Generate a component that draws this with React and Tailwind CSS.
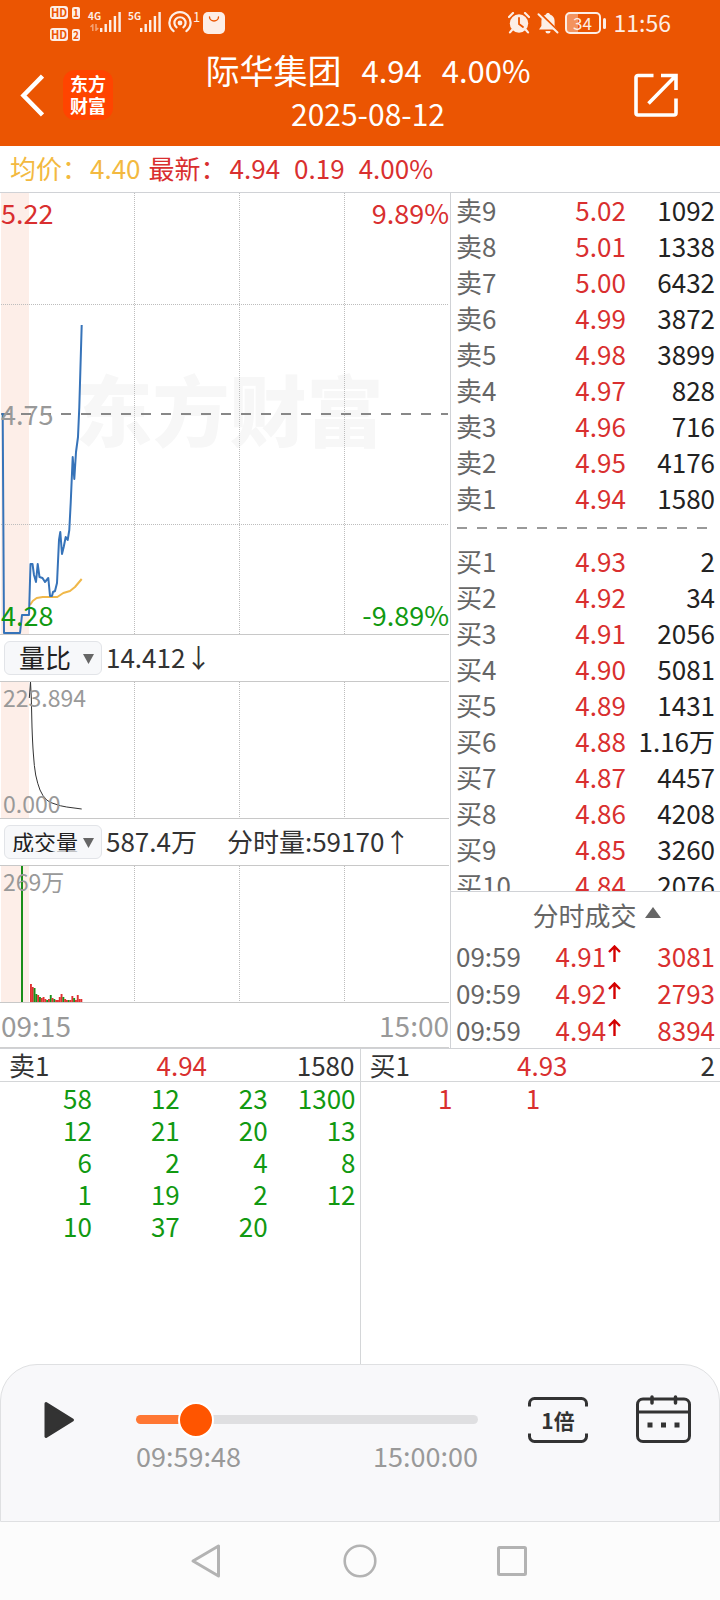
import { useState } from "react";

const asks = [
  ["卖9", "5.02", "1092"],
  ["卖8", "5.01", "1338"],
  ["卖7", "5.00", "6432"],
  ["卖6", "4.99", "3872"],
  ["卖5", "4.98", "3899"],
  ["卖4", "4.97", "828"],
  ["卖3", "4.96", "716"],
  ["卖2", "4.95", "4176"],
  ["卖1", "4.94", "1580"],
];

const bids = [
  ["买1", "4.93", "2"],
  ["买2", "4.92", "34"],
  ["买3", "4.91", "2056"],
  ["买4", "4.90", "5081"],
  ["买5", "4.89", "1431"],
  ["买6", "4.88", "1.16万"],
  ["买7", "4.87", "4457"],
  ["买8", "4.86", "4208"],
  ["买9", "4.85", "3260"],
  ["买10", "4.84", "2076"],
];

const ticks = [
  ["09:59", "4.91", "3081"],
  ["09:59", "4.92", "2793"],
  ["09:59", "4.94", "8394"],
];

const sellQueue = [
  ["58", "12", "23", "1300"],
  ["12", "21", "20", "13"],
  ["6", "2", "4", "8"],
  ["1", "19", "2", "12"],
  ["10", "37", "20", ""],
];

const buyQueue = [["1", "1", "", ""]];

const R = "#e03131";
const G = "#1a8f1a";
const volumeBars = [
  [18, R], [15, R], [14, G], [8, G], [7, R], [5, G], [4, R], [5, R], [3, R], [2, G],
  [3, R], [7, G], [4, R], [3, G], [2, R], [2, R], [5, R], [8, R], [5, G], [3, R],
  [2, R], [2, G], [2, R], [6, R], [4, G], [2, R], [7, R], [3, R], [3, R],
];

const pricePoints =
  "2.7,220 4,440 20,440 22,422 29,422 30.5,371 32.5,371 34,382 36,389 37.7,371 39.5,384 42.5,385 45,389 48.3,385 50,403 52,403 53,399 55,398 57,390 59,347 60.3,339 62,361 63.7,354 65.7,344 67.7,347 69.3,337 70.7,310 72.7,264 74.3,286 76,259 78,244 79.3,214 81.7,132";
const averagePoints =
  "30,412 32.7,408 36.7,405 42.7,404 57.3,404 63.3,400 70,398 75,394 81.7,386";

function Plot({ height, children }) {
  return (
    <svg
      className="absolute inset-0 h-full w-full"
      viewBox={`0 0 449 ${height}`}
      preserveAspectRatio="none"
      aria-hidden="true"
    >
      <rect x="1" y="0" width="28" height={height} fill="#fdeee8" />
      {[134.5, 239.5, 344.5].map((x) => (
        <line key={x} x1={x} x2={x} y1="0" y2={height} stroke="#bdbdbd" strokeDasharray="1 1" />
      ))}
      {children}
    </svg>
  );
}

function Signal({ label, data }) {
  return (
    <div className="relative flex items-start">
      <div className="w-3 text-[10px] leading-[10px] font-bold">{label}</div>
      <svg className="h-[22px] w-[22px]" viewBox="0 0 22 22" fill="currentColor" aria-hidden="true">
        <rect x="0" y="17" width="2.4" height="4" />
        <rect x="4.5" y="13" width="2.4" height="8" />
        <rect x="9" y="9" width="2.4" height="12" />
        <rect x="13.7" y="5" width="2.4" height="16" />
        <rect x="18.4" y="1" width="2.4" height="20" />
      </svg>
      {data && (
        <svg className="absolute bottom-0.5 left-0.5 h-[7px] w-[9px] opacity-50" viewBox="0 0 9 7" fill="none" stroke="currentColor" strokeWidth="1.5" aria-hidden="true">
          <path d="M2.800 7V0.800L0.500 3M6 0v6.200L8.300 4" />
        </svg>
      )}
    </div>
  );
}

function HdBadge({ n }) {
  return (
    <div className="flex h-[13px] items-center gap-1">
      <span className="flex h-[13px] w-[18px] items-center justify-center rounded-[3px] bg-[#fdeee6] text-[11px] leading-none font-bold text-[#eb5502]">
        HD
      </span>
      <span className="flex h-[12px] w-[8px] items-center justify-center rounded-[2px] bg-[#fdeee6] text-[10px] leading-none font-bold text-[#eb5502]">
        {n}
      </span>
    </div>
  );
}

function StatusBar() {
  return (
    <div className="flex h-12 items-start justify-between pr-[49px] pl-[50px] text-[#fdeee6]">
      <div className="flex items-start">
        <div className="flex flex-col gap-[9px] pt-[6px]">
          <HdBadge n="1" />
          <HdBadge n="2" />
        </div>
        <div className="flex gap-1.5 pt-[11px] pl-2">
          <Signal label="4G" data />
          <Signal label="5G" />
        </div>
        <div className="flex pt-[11px] pl-1.5">
          <svg className="h-[22px] w-6" viewBox="0 0 24 22" fill="none" stroke="currentColor" strokeWidth="2.2" strokeLinecap="round" aria-hidden="true">
            <circle cx="12" cy="12" r="2.4" fill="currentColor" stroke="none" />
            <path d="M8.6 16.3a5.6 5.6 0 1 1 6.8 0" />
            <path d="M5.6 20.2a10.6 10.6 0 1 1 12.8 0" />
          </svg>
          <span className="pl-px text-[13px] leading-[11px]">1</span>
        </div>
        <svg className="mt-[12px] ml-[3px] h-[22px] w-[22px]" viewBox="0 0 22 22" aria-hidden="true">
          <rect width="22" height="22" rx="5" fill="currentColor" />
          <path d="M6.5 5a4.5 4 0 0 0 9 0" fill="none" stroke="#eb5502" strokeWidth="1.4" strokeLinecap="round" />
        </svg>
      </div>
      <div className="flex h-[46px] items-center">
        <svg className="h-[22px] w-[22px]" viewBox="0 0 22 22" aria-hidden="true">
          <circle cx="11" cy="11.5" r="9.2" fill="currentColor" />
          <path d="M1 5l4-4M21 5l-4-4M4 18l-2 2.4M18 18l2 2.4" stroke="currentColor" strokeWidth="2.2" strokeLinecap="round" />
          <path d="M11 6v6l4 3" fill="none" stroke="#eb5502" strokeWidth="1.8" strokeLinecap="round" />
        </svg>
        <svg className="ml-[7px] h-[22px] w-[22px]" viewBox="0 0 22 22" aria-hidden="true">
          <path d="M11 1c1.200 0 1.900.7 2 1.500 3 1 4.600 3.400 4.600 6.500v5l2.400 3.500H2L4.400 14V9C4.400 5.900 6 3.500 9 2.500 9.100 1.700 9.800 1 11 1zM8.500 19h5a2.500 2.500 0 0 1-5 0z" fill="currentColor" />
          <path d="M3.500 1.500L22 20" stroke="#eb5502" strokeWidth="2" />
          <path d="M1.500 2.200L20.500 20.500" stroke="currentColor" strokeWidth="2" strokeLinecap="round" />
        </svg>
        <div className="ml-[6px] flex items-center gap-0.5">
          <span className="flex h-[22px] w-9 items-center justify-center rounded-[5px] border-2 border-current bg-linear-to-r from-[#f3935f] from-35% to-transparent to-35% pb-0.5 text-[17px] leading-none">
            34
          </span>
          <span className="h-[11px] w-[3px] rounded-sm bg-current" />
        </div>
        <span className="ml-2 pb-0.5 text-[23px] leading-none">11:56</span>
      </div>
    </div>
  );
}

function Header() {
  return (
    <header className="bg-[#eb5502] text-white">
      <StatusBar />
      <div className="flex h-[98px] items-start">
        <div className="flex w-[120px] items-center gap-[19px] pt-[22px] pl-5">
          <button aria-label="返回" className="w-6">
            <svg className="h-[50px] w-6" viewBox="0 0 24 50" fill="none" stroke="white" strokeWidth="4.5" aria-hidden="true">
              <path d="M22.500 6L3.500 25.500l19 19.500" />
            </svg>
          </button>
          <div className="flex h-[50px] w-[50px] flex-col items-center justify-center rounded-xl bg-[#ff4400] pb-0.5 text-[18px] leading-[22px] font-bold">
            <span>东方</span>
            <span>财富</span>
          </div>
        </div>
        <div className="flex flex-1 flex-col items-center">
          <h1 className="flex items-center gap-5 text-[31px] leading-[44px]">
            <span className="text-[34px]">际华集团</span>
            <span>4.94</span>
            <span>4.00%</span>
          </h1>
          <div className="text-[30px] leading-[42px]">2025-08-12</div>
        </div>
        <div className="w-[104px] pt-[24px] pl-[17px]">
          <button aria-label="分享" className="block">
            <svg className="h-[46px] w-[46px]" viewBox="0 0 46 46" fill="none" stroke="white" strokeWidth="3.6" aria-hidden="true">
              <path d="M20.500 3.500H5a2 2 0 0 0-2 2V41a2 2 0 0 0 2 2h36a2 2 0 0 0 2-2V26.500" />
              <path d="M28 3.500h15V18M42 4.500L15.500 31.500" />
            </svg>
          </button>
        </div>
      </div>
    </header>
  );
}

function Indicator({ label, options, small, children }) {
  return (
    <div className="flex h-[46px] items-center pl-1 text-[26px] leading-none text-[#333]">
      <label className="relative flex h-[34px] w-[98px] items-center rounded-md border border-[#e2e4e8] bg-[#f7f8fa]">
        <span className="sr-only">{label}</span>
        <select
          className={
            small
              ? "-my-1 block h-10 w-full appearance-none bg-transparent pb-0.5 pl-[7px] text-[22px] text-[#222]"
              : "-my-1 block h-10 w-full appearance-none bg-transparent pb-0.5 pl-[14px] text-[26px] text-[#222]"
          }
        >
          {options.map((o) => (
            <option key={o}>{o}</option>
          ))}
        </select>
        <svg className="pointer-events-none absolute top-3 right-[7px] h-[10px] w-[11px]" viewBox="0 0 11 10" aria-hidden="true">
          <path d="M0 0h11L5.500 10z" fill="#666" />
        </svg>
      </label>
      <div className="flex gap-[30px] pb-0.5 pl-1">{children}</div>
    </div>
  );
}

function Charts() {
  return (
    <div className="w-[62.5%] pr-px">
      <div className="relative h-[442px] border-b border-[#c8c8c8] text-[27px] leading-[32px]">
        <div className="absolute inset-0 flex items-center justify-center pb-3 pl-2.5 text-[77px] font-black text-[#f7f7f7]">
          东方财富
        </div>
        <Plot height={441}>
          <path d="M1 111.500H448M1 331.500H448" stroke="#bdbdbd" strokeDasharray="1 1" />
          <path d="M1 221H448" stroke="#888" strokeWidth="2" strokeDasharray="10 10" />
          <polyline points={averagePoints} fill="none" stroke="#f0b84a" strokeWidth="2" strokeLinejoin="round" />
          <polyline points={pricePoints} fill="none" stroke="#3673b9" strokeWidth="2" strokeLinejoin="round" />
        </Plot>
        <div className="relative flex h-full flex-col justify-between pt-[4px] pb-[3px] pl-px">
          <div className="flex justify-between text-[#d92f2f]">
            <span>5.22</span>
            <span>9.89%</span>
          </div>
          <div className="text-[#999]">4.75</div>
          <div className="flex justify-between text-[#119911]">
            <span>4.28</span>
            <span>-9.89%</span>
          </div>
        </div>
      </div>

      <Indicator label="指标一" options={["量比", "成交量"]}>
        <span>14.412↓</span>
      </Indicator>

      <div className="relative h-[138px] border-y border-[#c8c8c8] text-[23px] leading-[26px] text-[#999]">
        <Plot height={136}>
          <path
            d="M29.300 16L30.500 0L31.300 16L32 45Q32.600 62 33.300 71Q34.200 85 35.700 93Q37.600 102 40 108Q42.500 114 46.700 118Q50.500 121 55 122Q60 124 66.700 125L81.700 127"
            fill="none"
            stroke="#333"
            strokeWidth="1"
          />
        </Plot>
        <div className="relative flex h-full flex-col justify-between pt-0.5 pb-0.5 pl-[3px]">
          <span>223.894</span>
          <span>0.000</span>
        </div>
      </div>

      <Indicator label="指标二" options={["成交量", "量比"]} small>
        <span>587.4万</span>
        <span>分时量:59170↑</span>
      </Indicator>

      <div className="relative h-[138px] border-y border-[#c8c8c8] text-[23px] leading-[26px] text-[#999]">
        <Plot height={136}>
          <rect x="21" y="0" width="2" height="136" fill={G} />
          {volumeBars.map(([h, c], i) => (
            <rect key={i} x={30 + i * 1.8} y={136 - h} width="1.9" height={h} fill={c} />
          ))}
        </Plot>
        <div className="relative pt-0.5 pl-[3px]">269万</div>
      </div>

      <div className="flex h-[45px] items-center justify-between border-b border-[#d0d0d0] pl-px text-[28px] leading-none text-[#999]">
        <span>09:15</span>
        <span>15:00</span>
      </div>
    </div>
  );
}

function BookTable({ rows, name }) {
  return (
    <table aria-label={name} className="w-full table-fixed border-collapse text-[26px] leading-9">
      <tbody>
        {rows.map(([label, price, qty]) => (
          <tr key={label}>
            <td className="w-[30%] p-0 pl-[5px] text-[#666]">{label}</td>
            <td className="w-[35%] p-0 text-right text-[#d92f2f]">{price}</td>
            <td className="w-[35%] p-0 pr-[5px] text-right text-[#222]">{qty}</td>
          </tr>
        ))}
      </tbody>
    </table>
  );
}

function OrderBook() {
  return (
    <div className="flex w-[37.5%] flex-col border-l border-[#d0d2d6]">
      <div className="-mt-px min-h-0 grow basis-[0px] overflow-hidden">
        <BookTable rows={asks} name="卖盘" />
        <div className="flex h-[27px] items-start pt-[11px] pr-3 pl-1.5">
          <div className="h-0.5 w-full bg-[repeating-linear-gradient(90deg,#999_0px,#999_10px,transparent_10px,transparent_20px)]" />
        </div>
        <BookTable rows={bids} name="买盘" />
      </div>
      <div className="border-t border-[#d0d2d6]">
        <button className="flex h-[45px] w-full items-center justify-center gap-2 pl-[22px] text-[26px] leading-none text-[#666]">
          分时成交
          <svg className="mb-1 h-[11px] w-4" viewBox="0 0 16 11" aria-hidden="true">
            <path d="M8 0l8 11H0z" fill="#666" />
          </svg>
        </button>
        <table aria-label="分时成交" className="w-full table-fixed border-collapse text-[26px] leading-[37px]">
          <tbody>
            {ticks.map(([time, price, qty]) => (
              <tr key={price}>
                <td className="w-[28%] p-0 pl-[5px] text-[#666]">{time}</td>
                <td className="w-[36%] p-0 text-right text-[#d92f2f]">
                  <span className="flex items-center justify-end gap-0.5 pr-0.5">
                    {price}
                    <svg className="mb-1 h-[17px] w-[13px]" viewBox="0 0 13 17" fill="none" stroke="#d40000" strokeWidth="2.4" aria-hidden="true">
                      <path d="M6.500 17V2M1 7l5.500-5.500L12 7" />
                    </svg>
                  </span>
                </td>
                <td className="w-[36%] p-0 pr-[5px] text-right text-[#d92f2f]">{qty}</td>
              </tr>
            ))}
          </tbody>
        </table>
      </div>
    </div>
  );
}

function Queue({ label, price, qty, rows, color }) {
  return (
    <div className="flex-1 text-[26px] leading-8 first:border-r first:border-[#d4d6d8]">
      <div className="grid h-[33px] grid-cols-3 border-b border-[#d4d6d8] pr-[5px] pl-[9px] text-[#333]">
        <span>{label}</span>
        <span className="text-center text-[#d92f2f]">{price}</span>
        <span className="text-right">{qty}</span>
      </div>
      <div className="pr-1 pl-1">
        <table aria-label={label} className="w-full table-fixed border-collapse">
          <tbody className={color}>
            {rows.map((row, i) => (
              <tr key={i}>
                {row.map((v, j) => (
                  <td key={j} className="p-0 text-right">
                    {v}
                  </td>
                ))}
              </tr>
            ))}
          </tbody>
        </table>
      </div>
    </div>
  );
}

function Player() {
  const [value, setValue] = useState(137);
  const pct = value / 10;
  return (
    <div className="flex h-[158px] items-start rounded-t-[37px] border border-[#dfe0e2] bg-[#f8f8fa] pr-[28px] pl-[42px]">
      <button aria-label="播放" className="mt-[35px] h-10 w-8">
        <svg className="h-10 w-8" viewBox="0 0 32 40" aria-hidden="true">
          <path d="M3 3.500L29.500 20L3 36.500z" fill="#333" stroke="#333" strokeWidth="3" strokeLinejoin="round" />
        </svg>
      </button>
      <div className="ml-[61px] flex-1 pt-[36px]">
        <input
          type="range"
          aria-label="播放进度"
          min="0"
          max="1000"
          value={value}
          onChange={(e) => setValue(Number(e.target.value))}
          style={{
            backgroundImage: `linear-gradient(90deg, #ff7733 ${pct + 4}%, #dfdfe1 ${pct + 4}%)`,
          }}
          className="my-[14px] block h-[9px] w-full appearance-none rounded-full [&::-webkit-slider-thumb]:h-9 [&::-webkit-slider-thumb]:w-9 [&::-webkit-slider-thumb]:appearance-none [&::-webkit-slider-thumb]:rounded-full [&::-webkit-slider-thumb]:border-2 [&::-webkit-slider-thumb]:border-white [&::-webkit-slider-thumb]:bg-[#ff5500]"
        />
        <div className="flex justify-between text-[27px] leading-[36px] text-[#999]">
          <span>09:59:48</span>
          <span>15:00:00</span>
        </div>
      </div>
      <button aria-label="1倍速" className="relative mt-[32px] ml-[50px] h-[46px] w-[60px] text-[21px] leading-[46px] font-bold text-[#333]">
        <svg className="absolute inset-0 h-full w-full" viewBox="0 0 60 46" fill="none" stroke="#333" strokeWidth="3" aria-hidden="true">
          <path d="M1.500 9.500V6.500a5 5 0 0 1 5-5h47a5 5 0 0 1 5 5v3M1.500 36.500v3a5 5 0 0 0 5 5h47a5 5 0 0 0 5-5v-3" />
        </svg>
        <span className="relative">1倍</span>
      </button>
      <button aria-label="选择日期" className="mt-[30px] ml-[48px]">
        <svg className="block h-12 w-[55px]" viewBox="0 0 55 48" fill="none" stroke="#333" strokeWidth="3" aria-hidden="true">
          <rect x="1.500" y="4" width="52" height="42.500" rx="5.500" />
          <path d="M2 17H53" />
          <path d="M16 2v6M39.500 2v6" strokeWidth="3.500" strokeLinecap="round" />
          <path d="M11.500 30h5M25 30h5M38.500 30h5" strokeWidth="5" />
        </svg>
      </button>
    </div>
  );
}

function NavBar() {
  return (
    <nav aria-label="系统导航" className="flex h-[78px] items-center justify-center gap-[116px] bg-[#fcfcfc]">
      <button aria-label="后退">
        <svg className="block h-9 w-9" viewBox="0 0 36 36" fill="none" stroke="#b3b3b3" strokeWidth="3" strokeLinejoin="round" aria-hidden="true">
          <path d="M28.500 3v30L3 18z" />
        </svg>
      </button>
      <button aria-label="主页">
        <svg className="block h-9 w-9" viewBox="0 0 36 36" fill="none" stroke="#b3b3b3" strokeWidth="2.600" aria-hidden="true">
          <circle cx="18" cy="18" r="15.300" />
        </svg>
      </button>
      <button aria-label="最近任务">
        <svg className="block h-9 w-9" viewBox="0 0 36 36" fill="none" stroke="#b3b3b3" strokeWidth="3" strokeLinejoin="round" aria-hidden="true">
          <rect x="4.500" y="4.500" width="27" height="27" rx="1" />
        </svg>
      </button>
    </nav>
  );
}

export default function App() {
  return (
    <div className="flex min-h-screen flex-col bg-white font-['Noto_Sans_CJK_SC',sans-serif]">
      <Header />
      <div className="flex h-[47px] items-center border-b border-[#d0d2d6] pb-0.5 pl-[10px] text-[26px] leading-none">
        <span className="text-[#f3b940]">均价：</span>
        <span className="pl-0.5 text-[#f3b940]">4.40</span>
        <span className="pl-2 text-[#d92f2f]">最新：</span>
        <span className="flex gap-3.5 pl-[3px] text-[#d92f2f]">
          <span>4.94</span>
          <span>0.19</span>
          <span>4.00%</span>
        </span>
      </div>
      <div className="flex border-b border-[#d0d2d6]">
        <Charts />
        <OrderBook />
      </div>
      <div className="flex flex-1">
        <Queue label="卖1" price="4.94" qty="1580" rows={sellQueue} color="text-[#119911]" />
        <Queue label="买1" price="4.93" qty="2" rows={buyQueue} color="text-[#d92f2f]" />
      </div>
      <Player />
      <NavBar />
    </div>
  );
}
